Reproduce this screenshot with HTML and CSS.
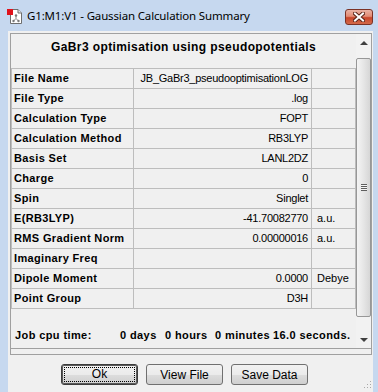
FILE: index.html
```html
<!DOCTYPE html>
<html lang="en">
<head>
  <meta charset="UTF-8">
  <title>G1:M1:V1 - Gaussian Calculation Summary</title>
  <link rel="stylesheet" href="styles.css">
</head>
<body>

  <div class="window">

    <!-- title bar -->
    <div class="titlebar">
      <svg class="app-icon" width="16" height="16" viewBox="0 0 16 16">
        <path d="M3.5 1.5 H11 L14.5 5 V15.5 H3.5 Z" fill="#fff" stroke="#6e6e6e"/>
        <path d="M11 1.5 V5 H14.5" fill="#e8e8e8" stroke="#6e6e6e"/>
        <rect x="0" y="1" width="6" height="6" fill="#e0121b"/>
        <path d="M9 7.5 V10.5 L6.5 13 M9 10.5 L11.5 13" stroke="#8a8a8a" stroke-width="1" fill="none"/>
        <circle cx="9" cy="7.5" r="1.2" fill="#7a7a7a"/>
        <circle cx="6.5" cy="13" r="1.2" fill="#7a7a7a"/>
        <circle cx="11.5" cy="13" r="1.2" fill="#7a7a7a"/>
      </svg>
      <span class="title">G1:M1:V1 - Gaussian Calculation Summary</span>
      <div class="close-btn">
        <svg width="12" height="10" viewBox="0 0 12 10">
          <path d="M2 1.5 L10 8.5 M10 1.5 L2 8.5" stroke="#5a2418" stroke-width="4" stroke-linecap="square"/>
          <path d="M2 1.5 L10 8.5 M10 1.5 L2 8.5" stroke="#fff" stroke-width="2" stroke-linecap="square"/>
        </svg>
      </div>
    </div>

    <!-- dialog body -->
    <div class="client">
      <div class="panel">
        <div class="scroller">
          <div class="content">
            <div class="heading">GaBr3 optimisation using pseudopotentials</div>

            <div class="summary">
              <div class="cell label">File Name</div>
              <div class="cell value">JB_GaBr3_pseudooptimisationLOG</div>
              <div class="cell unit"></div>

              <div class="cell label">File Type</div>
              <div class="cell value">.log</div>
              <div class="cell unit"></div>

              <div class="cell label">Calculation Type</div>
              <div class="cell value">FOPT</div>
              <div class="cell unit"></div>

              <div class="cell label">Calculation Method</div>
              <div class="cell value">RB3LYP</div>
              <div class="cell unit"></div>

              <div class="cell label">Basis Set</div>
              <div class="cell value">LANL2DZ</div>
              <div class="cell unit"></div>

              <div class="cell label">Charge</div>
              <div class="cell value">0</div>
              <div class="cell unit"></div>

              <div class="cell label">Spin</div>
              <div class="cell value">Singlet</div>
              <div class="cell unit"></div>

              <div class="cell label">E(RB3LYP)</div>
              <div class="cell value">-41.70082770</div>
              <div class="cell unit">a.u.</div>

              <div class="cell label">RMS Gradient Norm</div>
              <div class="cell value">0.00000016</div>
              <div class="cell unit">a.u.</div>

              <div class="cell label">Imaginary Freq</div>
              <div class="cell value"></div>
              <div class="cell unit"></div>

              <div class="cell label">Dipole Moment</div>
              <div class="cell value">0.0000</div>
              <div class="cell unit">Debye</div>

              <div class="cell label">Point Group</div>
              <div class="cell value">D3H</div>
              <div class="cell unit"></div>
            </div>

            <div class="cpu">
              <span class="cpu-label">Job cpu time:</span>
              <span class="cpu-days">0 days</span>
              <span class="cpu-hours">0 hours</span>
              <span class="cpu-mins">0 minutes</span>
              <span>16.0 seconds.</span>
            </div>
          </div>

          <div class="scrollbar">
            <div class="arrow-btn"><span class="arrow up"></span></div>
            <div class="thumb"><span class="thumb-grip"></span></div>
            <div class="arrow-btn bottom"><span class="arrow down"></span></div>
          </div>
        </div>
        <div class="panel-foot"></div>
      </div>

      <div class="buttons">
        <button class="btn default"><span>Ok</span></button>
        <button class="btn"><span>View File</span></button>
        <button class="btn"><span>Save Data</span></button>
      </div>

      <div class="size-grip"></div>
    </div>

  </div>

</body>
</html>
```

FILE: styles.css
```css
body {
  margin: 0;
  background-color: #c6d8ef;
  font-family: 'Liberation Sans', Arial, sans-serif;
  font-size: 11px;
  color: #000;
}


.window {
  width: 378px;
  height: 392px;
  display: flex;
  flex-direction: column;
  overflow: hidden;
}


/* title bar */
.titlebar {
  height: 31px;
  flex: none;
  display: flex;
  align-items: center;
  padding-left: 7px;
}

.app-icon {
  flex: none;
  margin-right: 4px;
}

.title {
  font-family: 'Noto Sans', 'Open Sans', sans-serif;
  font-size: 11.5px;
  color: #000;
  letter-spacing: -0.15px;
}

.close-btn {
  margin-left: auto;
  margin-right: 5px;
  align-self: flex-start;
  margin-top: 9px;
  width: 28px;
  height: 16px;
  box-sizing: border-box;
  border: 1px solid #7b3225;
  border-radius: 3px;
  background: linear-gradient(#eab2a4 0%, #e28b74 45%, #c8452a 55%, #d36a4a 100%);
  display: flex;
  align-items: center;
  justify-content: center;
}


/* dialog client area */
.client {
  flex: 1;
  margin-left: 8px;
  margin-right: 5px;
  padding: 2px 1px 0 2px;
  background-color: #f0f0f0;
  position: relative;
}

.panel {
  border: 1px solid #a0a0a0;
}

.scroller {
  height: 314px;
  display: flex;
  border-bottom: 1px solid #a0a0a0;
}

.panel-foot {
  height: 5px;
}

.content {
  width: 345px;
  flex: none;
}

.heading {
  height: 34px;
  box-sizing: border-box;
  padding-top: 5px;
  line-height: 16px;
  text-align: center;
  font-weight: bold;
  font-size: 12px;
  letter-spacing: 0.4px;
}


/* summary grid */
.summary {
  display: grid;
  grid-template-columns: 122px 178px 44px;
  border-right: 1px solid #bdbdbd;
  border-bottom: 1px solid #bdbdbd;
}

.cell {
  height: 20px;
  box-sizing: border-box;
  border-top: 1px solid #bdbdbd;
  border-left: 1px solid #bdbdbd;
  line-height: 19px;
  white-space: nowrap;
  overflow: hidden;
}

.cell.label {
  font-weight: bold;
  padding-left: 2px;
  letter-spacing: 0.35px;
}

.cell.value {
  text-align: right;
  padding-right: 3px;
  letter-spacing: -0.25px;
}

.cell.unit {
  padding-left: 5px;
}

.cpu {
  display: flex;
  padding: 18px 0 0 4px;
  line-height: 16px;
  font-weight: bold;
  letter-spacing: 0.4px;
}

.cpu-label {
  width: 105px;
}

.cpu-days {
  width: 45px;
}

.cpu-hours {
  width: 50px;
}

.cpu-mins {
  width: 58px;
}


/* scrollbar */
.scrollbar {
  width: 15px;
  flex: none;
  display: flex;
  flex-direction: column;
  background-color: #f2f2f2;
}

.arrow-btn {
  height: 17px;
  display: flex;
  align-items: center;
  justify-content: center;
}

.arrow-btn.bottom {
  margin-top: auto;
}

.arrow {
  width: 0;
  height: 0;
  border-left: 4px solid transparent;
  border-right: 4px solid transparent;
}

.arrow.up {
  border-bottom: 4px solid #404040;
}

.arrow.down {
  border-top: 4px solid #404040;
}

.thumb {
  margin-top: 7px;
  height: 259px;
  box-sizing: border-box;
  border: 1px solid #979797;
  border-radius: 2px;
  background: linear-gradient(90deg, #f4f4f4, #e6e6e6 50%, #d6d6d6);
  display: flex;
  align-items: center;
  justify-content: center;
}

.thumb-grip {
  width: 6px;
  height: 7px;
  background: repeating-linear-gradient(#5e5e5e 0 1px, #f5f5f5 1px 2px);
}


/* buttons */
.buttons {
  display: flex;
  gap: 8px;
  padding-left: 51px;
  margin-top: 9px;
}

.btn {
  width: 77px;
  height: 21px;
  padding: 0;
  border: 1px solid #707070;
  border-radius: 3px;
  background: linear-gradient(#f2f2f2 0%, #ebebeb 50%, #dddddd 51%, #cfcfcf 100%);
  font-family: 'Liberation Sans', Arial, sans-serif;
  font-size: 12px;
  color: #000;
}

.btn.default {
  border-color: #3c3c3c;
  box-shadow: inset 0 0 0 1px #5a5a5a;
}

.btn.default span {
  display: block;
  margin: 2px;
  line-height: 13px;
  border: 1px dotted #000;
}

.size-grip {
  position: absolute;
  right: 2px;
  bottom: 4px;
  width: 8px;
  height: 8px;
  background:
    radial-gradient(circle, #a9a9a9 0.8px, transparent 1px) 0 0 / 3px 3px;
  clip-path: polygon(100% 0, 100% 100%, 0 100%);
}
```
